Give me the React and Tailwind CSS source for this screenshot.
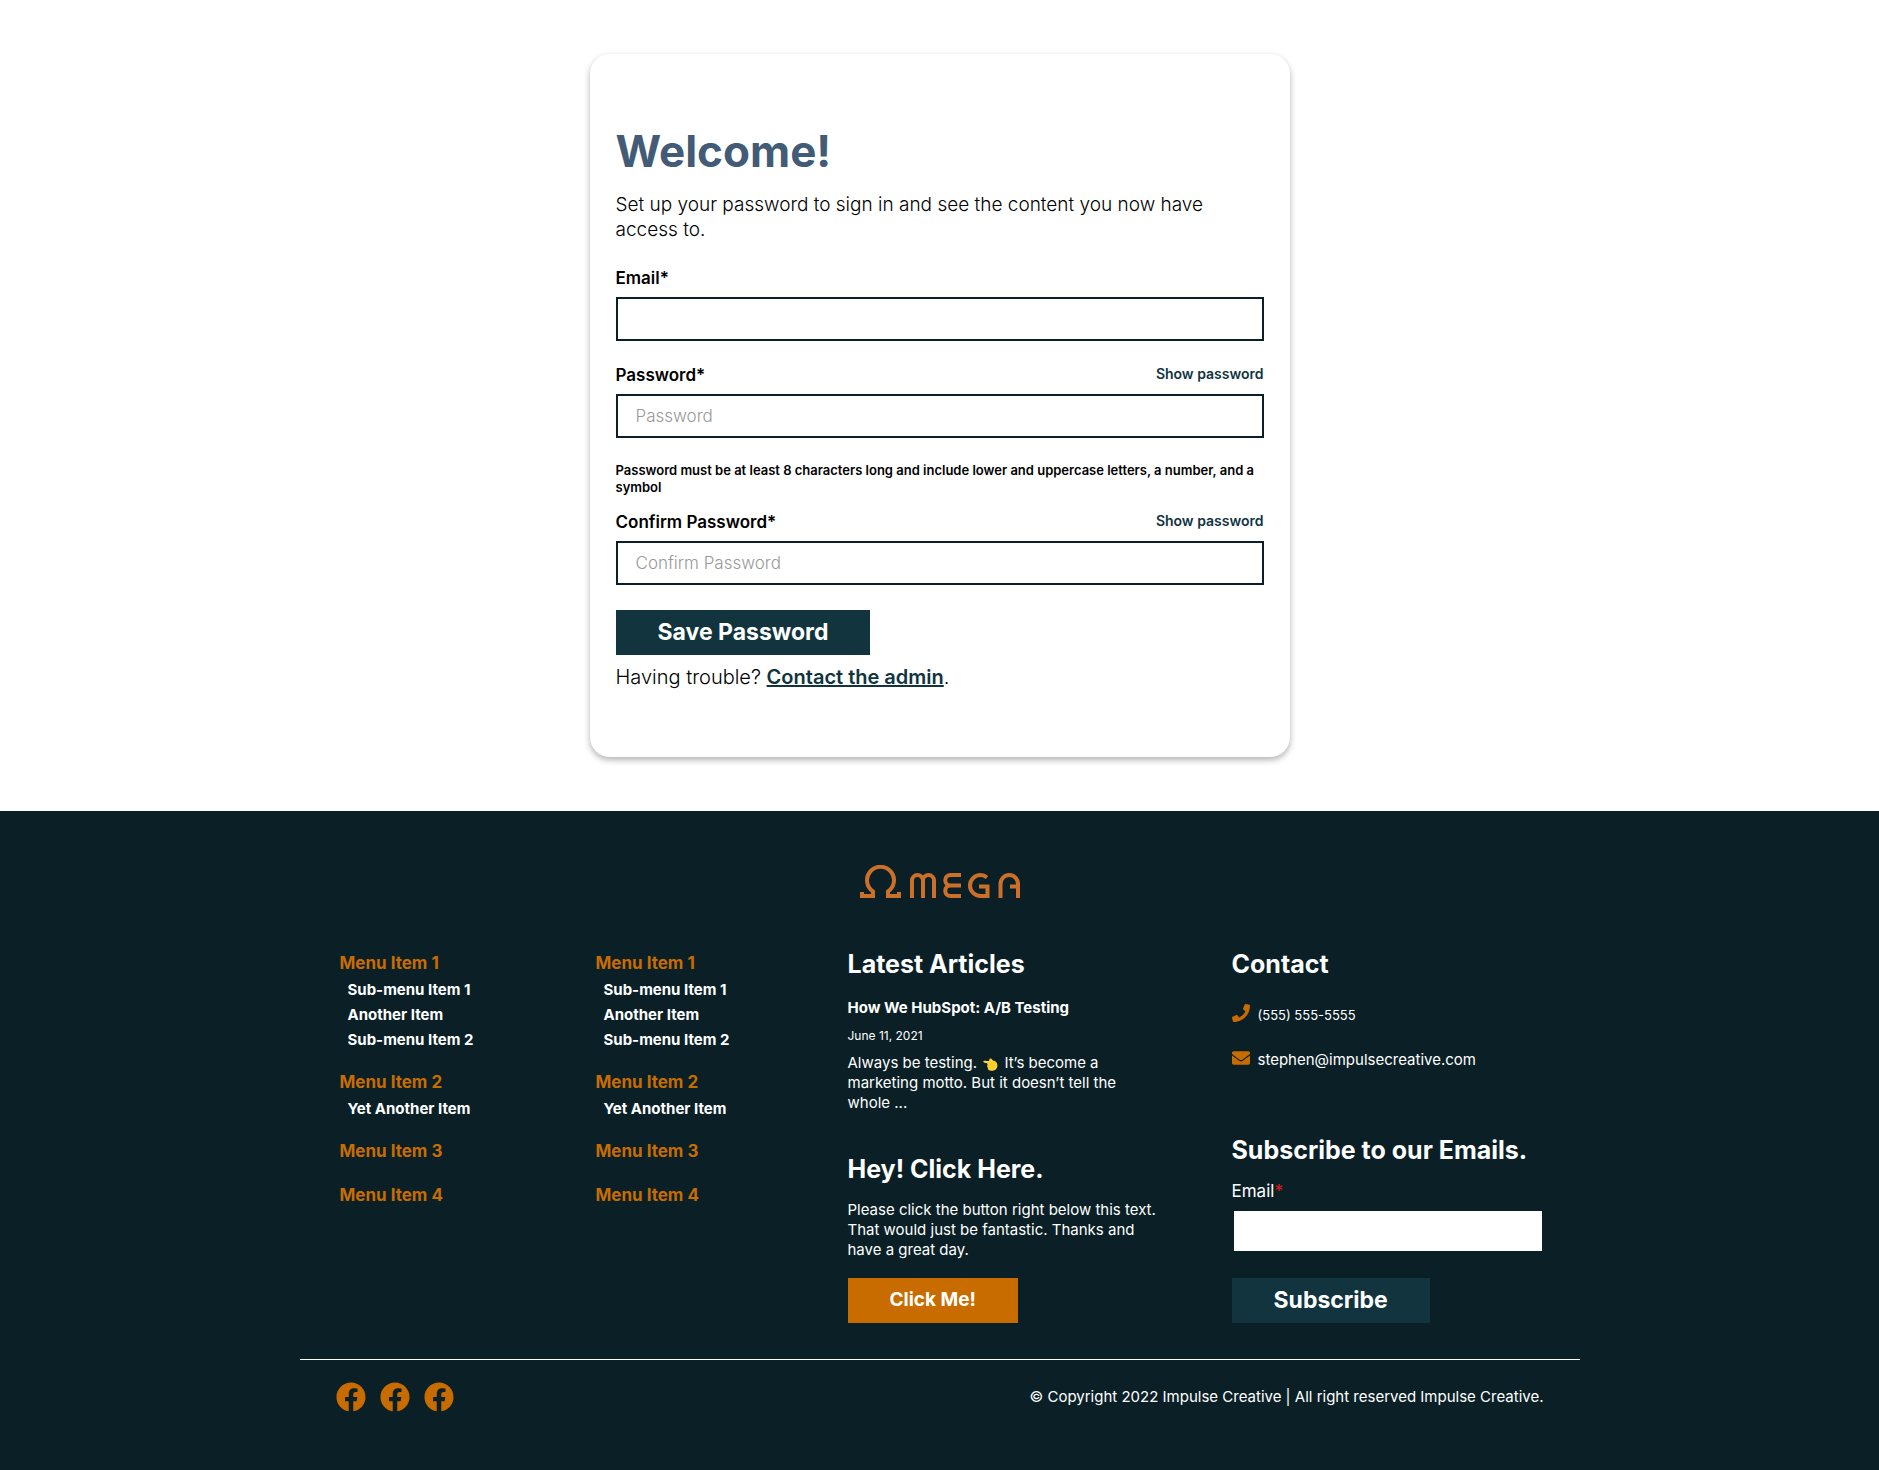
import React, { useState } from "react";
import { FaPhone, FaEnvelope, FaFacebook } from "react-icons/fa";

function Logo() {
  return (
    <svg viewBox="0 0 160 33" className="h-[33px] w-40" fill="none" stroke="#cc7029" strokeWidth="4" role="img" aria-label="Omega">
      <path d="M2 27V31H13V26.5A13.5 13.5 0 1 1 28 26.5V31H39V27" />
      <path d="M52 33V15.5a5.5 5.5 0 0 1 11 0V33M63 15.5a5.5 5.5 0 0 1 11 0V33" />
      <path d="M101 10H90.5a5.25 5.25 0 0 0 0 10.5H101M90.5 20.5a5.25 5.25 0 0 0 0 10.5H101" />
      <path d="M127 12.5C125 10.8 123 10 120.5 10A10.5 10.5 0 0 0 120.5 31H127.5V21.5H119" />
      <path d="M140.5 33V19a8.75 9 0 0 1 17.5 0V33M150 21.5H158" />
    </svg>
  );
}

function PointingHand() {
  return (
    <svg viewBox="0 0 15 13" className="mx-0.5 inline-block h-[13px] w-[15px] align-[-3px]" aria-hidden="true">
      <path fill="#ffd02e" d="M1.2 2.8C2.5 2.5 4.5 3 6 3C6.3 2 6.2 .6 7.5 .4C9 .3 9.2 2 10 2.6C12.5 2.8 14.4 4.5 14.4 7.5C14.4 10.8 12 12.8 8.5 12.8C6 12.8 4.6 11.6 4.8 9.8C4 9 4 7.8 4.6 6.8C4 6 4.2 5.6 4.4 5.3L1.3 4.8C0 4.5 0 3 1.2 2.8Z" />
      <path stroke="#f0b52c" strokeWidth="0.5" fill="none" d="M5 6.8H7.5M5 9.6H7.5" />
    </svg>
  );
}

const menu = [
  ["Menu Item 1", ["Sub-menu Item 1", "Another Item", "Sub-menu Item 2"]],
  ["Menu Item 2", ["Yet Another Item"]],
  ["Menu Item 3", []],
  ["Menu Item 4", []],
];

function FooterMenu({ label }) {
  return (
    <nav aria-label={label} className="px-10 pt-1">
      <ul className="flex flex-col gap-[17px]">
        {menu.map(([title, items]) => (
          <li key={title}>
            <a href="#" className="block text-[17px] leading-[27px] font-bold text-[#c96c00]">{title}</a>
            {items.length > 0 && (
              <ul className="pl-2">
                {items.map((item) => (
                  <li key={item}>
                    <a href="#" className="block text-[15px] leading-[25px] font-bold">{item}</a>
                  </li>
                ))}
              </ul>
            )}
          </li>
        ))}
      </ul>
    </nav>
  );
}

const fieldClass =
  "block h-11 w-full border-2 border-[#0a2026] bg-white px-[18px] text-[17px] font-light text-black outline-none placeholder:text-[#999]";

function PasswordField({ id, label }) {
  const [shown, setShown] = useState(false);
  return (
    <div>
      <div className="flex h-[29px] items-start justify-between">
        <label htmlFor={id} className="text-[17px] leading-5 font-semibold">{label}*</label>
        <button type="button" onClick={() => setShown(!shown)} className="text-sm leading-[18px] font-semibold text-[#11343f]">
          Show password
        </button>
      </div>
      <input id={id} type={shown ? "text" : "password"} placeholder={label} className={fieldClass} />
    </div>
  );
}

export default function App() {
  return (
    <div className="min-h-screen bg-white font-['Inter',sans-serif] text-black">
      <main className="px-4 py-[54px]">
        <form className="mx-auto max-w-[700px] rounded-[20px] bg-white px-[26px] pt-[70px] pb-[67px] shadow-[0_3px_6px_rgba(0,0,0,0.3)]" onSubmit={(e) => e.preventDefault()}>
          <h1 className="text-[44px] leading-[54px] font-bold text-[#425b76]">Welcome!</h1>
          <p className="mt-[14px] text-[19px] leading-[25px] font-light">
            Set up your password to sign in and see the content you now have access to.
          </p>
          <div className="mt-[26px]">
            <label htmlFor="email" className="block h-[29px] text-[17px] leading-5 font-semibold">Email*</label>
            <input id="email" type="email" className={fieldClass} />
          </div>
          <div className="mt-6">
            <PasswordField id="password" label="Password" />
          </div>
          <p className="mt-6 text-[13px] leading-[17px] font-semibold">
            Password must be at least 8 characters long and include lower and uppercase letters, a number, and a symbol
          </p>
          <div className="mt-4">
            <PasswordField id="confirm" label="Confirm Password" />
          </div>
          <button type="submit" className="mt-[25px] block h-[45px] bg-[#11343f] px-[42px] text-[23px] font-bold text-white">
            Save Password
          </button>
          <p className="mt-[10px] text-xl leading-[25px] font-light">
            Having trouble? <a href="#" className="font-semibold text-[#11343f] underline">Contact the admin</a>.
          </p>
        </form>
      </main>

      <footer className="min-h-[659px] bg-[#0a2026] pt-[54px] text-white">
        <div className="flex justify-center">
          <Logo />
        </div>
        <div className="mx-auto mt-12 max-w-[1280px]">
          <div className="grid grid-cols-[2fr_2fr_3fr_3fr] border-b border-white pb-9">
            <FooterMenu label="Footer menu one" />
            <FooterMenu label="Footer menu two" />
            <div className="px-9">
              <h2 className="text-[25px] leading-9 font-bold">Latest Articles</h2>
              <h3 className="mt-4 text-[15px] leading-5 font-bold">
                <a href="#">How We HubSpot: A/B Testing</a>
              </h3>
              <p className="mt-2 text-xs leading-5">June 11, 2021</p>
              <p className="mt-[7px] text-[15px] leading-5">
                Always be testing. <PointingHand /> It’s become a marketing motto. But it doesn’t tell the whole ...
              </p>
              <h2 className="mt-[38px] text-[25px] leading-9 font-bold">Hey! Click Here.</h2>
              <p className="mt-[13px] text-[15px] leading-5">
                Please click the button right below this text. That would just be fantastic. Thanks and have a great day.
              </p>
              <button type="button" className="mt-[18px] block h-[45px] bg-[#c96c00] px-[42px] text-[19px] font-bold">Click Me!</button>
            </div>
            <div className="px-9">
              <h2 className="text-[25px] leading-9 font-bold">Contact</h2>
              <a href="tel:5555555555" className="mt-[22px] flex items-center gap-2 text-[13px] leading-5">
                <FaPhone className="mb-1 size-[18px] text-[#c96c00]" />
                (555) 555-5555
              </a>
              <a href="mailto:stephen@impulsecreative.com" className="mt-[23px] flex items-center gap-2 text-[15px] leading-5">
                <FaEnvelope className="mb-1 size-[18px] text-[#c96c00]" />
                stephen@impulsecreative.com
              </a>
              <form onSubmit={(e) => e.preventDefault()}>
                <h2 className="mt-[61px] text-[25px] leading-9 font-bold whitespace-nowrap">Subscribe to our Emails.</h2>
                <label htmlFor="subscribe" className="mt-[11px] block text-[17px] leading-6">
                  Email<span className="text-[#e51520]">*</span>
                </label>
                <input id="subscribe" type="email" className={fieldClass + " mt-[6px]"} />
                <button type="submit" className="mt-[25px] block h-[45px] bg-[#11343f] px-[42px] text-[23px] font-bold">Subscribe</button>
              </form>
            </div>
          </div>
          <div className="flex items-center justify-between px-9 pt-[22px]">
            <div className="flex gap-[14px]">
              {[1, 2, 3].map((n) => (
                <a key={n} href="#" aria-label="Facebook">
                  <FaFacebook className="size-[30px] text-[#c96c00]" />
                </a>
              ))}
            </div>
            <p className="text-[15px] leading-5">© Copyright 2022 Impulse Creative | All right reserved Impulse Creative.</p>
          </div>
        </div>
      </footer>
    </div>
  );
}
